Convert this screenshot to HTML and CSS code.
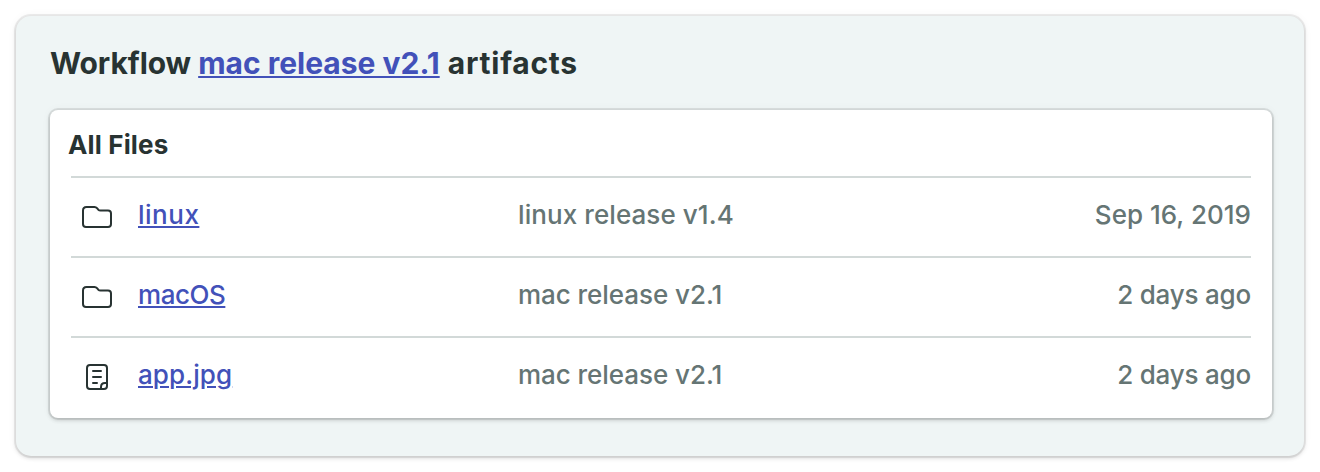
FILE: index.html
```html
<!DOCTYPE html>
<html lang="en">
<head>
<meta charset="utf-8">
<title>Workflow artifacts</title>
<link rel="stylesheet" href="styles.css">
</head>
<body>
<main class="panel">
  <h1 class="title"><span class="t1">Workflow</span> <a class="link t2" href="#">mac release v2.1</a> <span class="t3">artifacts</span></h1>
  <section class="card">
    <h2 class="card-title">All Files</h2>
    <div class="row">
      <svg class="icon" viewBox="0 0 32 32"><path d="M2 23V9.500Q2 6 5.500 6H13.500Q15 6 16 7.200L17.300 8.700Q18.200 9.500 19.500 9.500H27Q30 9.500 30 12.500V23Q30 26 27 26H5Q2 26 2 23Z"/></svg>
      <span class="name"><a class="link n1" href="#">linux</a></span>
      <span class="release r1">linux release v1.4</span>
      <span class="date d1">Sep 16, 2019</span>
    </div>
    <div class="row">
      <svg class="icon" viewBox="0 0 32 32"><path d="M2 23V9.500Q2 6 5.500 6H13.500Q15 6 16 7.200L17.300 8.700Q18.200 9.500 19.500 9.500H27Q30 9.500 30 12.500V23Q30 26 27 26H5Q2 26 2 23Z"/></svg>
      <span class="name"><a class="link n2" href="#">macOS</a></span>
      <span class="release r2">mac release v2.1</span>
      <span class="date d2">2 days ago</span>
    </div>
    <div class="row">
      <svg class="icon" viewBox="0 0 32 32"><path d="M9 4H23Q26 4 26 7V25Q26 28 23 28H9Q6 28 6 25V7Q6 4 9 4ZM26 22H24Q20 22 20 26V28M12 10H20M12 16H20M12 22H16"/></svg>
      <span class="name"><a class="link n3" href="#">app.jpg</a></span>
      <span class="release r2">mac release v2.1</span>
      <span class="date d2">2 days ago</span>
    </div>
  </section>
</main>
</body>
</html>
```
FILE: styles.css
```css
* { box-sizing: border-box; }
body { margin: 0; padding: 16px; background: #fff; font-family: Inter, sans-serif; font-size: 26px; color: #283332; }
.panel { height: 440px; padding: 26px 32px 0 34px; border-radius: 15px; background: #eff5f5; box-shadow: 0 0 0 2px rgba(23, 24, 24, .07), 0 0 10px rgba(23, 24, 24, .05), 0 2px 4px rgba(0, 0, 0, .15); }
.title { margin: 0 0 26px; font-size: 30px; line-height: 42px; font-weight: 650; white-space: nowrap; }
.t1 { letter-spacing: -.08px; }
.t2 { letter-spacing: 0; }
.t3 { margin-left: 1px; letter-spacing: .75px; }
.link { color: #4251b9; text-decoration: underline; text-decoration-thickness: 2px; text-underline-offset: 2px; }
.card { height: 308px; padding: 0 21px; border-radius: 8px; background: #fff; box-shadow: 0 0 0 2px rgba(23, 24, 24, .09), 0 0 10px rgba(23, 24, 24, .05), 0 2px 4px rgba(0, 0, 0, .18); }
.card-title { height: 66px; margin: 0 0 0 -3px; font-size: 26px; line-height: 70px; font-weight: 650; letter-spacing: .15px; }
.row { display: grid; grid-template-columns: 67px 380px 1fr auto; height: 80px; line-height: 74px; border-top: 2px solid #d2d9d8; white-space: nowrap; }
.icon { width: 32px; height: 32px; margin: 23px 0 0 10px; fill: none; stroke: #283332; stroke-width: 2; stroke-linecap: round; stroke-linejoin: round; }
.release, .date { color: #657574; }
.name, .release, .date { font-weight: 460; }
.n1 { letter-spacing: .5px; }
.n2 { letter-spacing: -.45px; }
.n3 { letter-spacing: .1px; }
.r1 { letter-spacing: .08px; }
.r2 { letter-spacing: -.05px; }
.d1 { letter-spacing: .02px; }
.d2 { letter-spacing: -.2px; }
```
